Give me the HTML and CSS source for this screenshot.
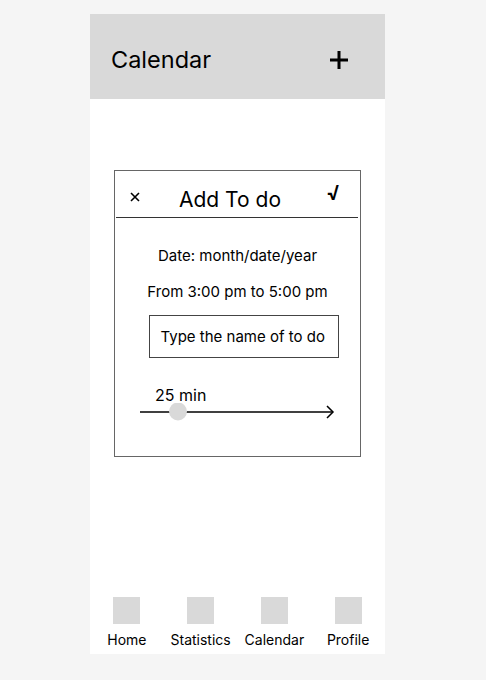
FILE: index.html
```html
<!DOCTYPE html>
<html>
<head>
<meta charset="utf-8">
<link rel="stylesheet" href="styles.css">
</head>
<body>
<div class="phone">
  <header class="topbar">
    <span class="title">Calendar</span>
    <svg class="plus" width="18" height="18" viewBox="0 0 18 18"><path d="M9 0V18M0 9H18" stroke="#000" stroke-width="3"/></svg>
  </header>
  <main class="content">
    <section class="dialog">
      <div class="dlg-head">
        <svg class="close" width="10" height="10" viewBox="0 0 10 10"><path d="M1 1L9 9M9 1L1 9" stroke="#000" stroke-width="1.6"/></svg>
        <span class="dlg-title">Add To do</span>
        <span class="check">√</span>
      </div>
      <div class="divider"></div>
      <p class="line date">Date: month/date/year</p>
      <p class="line time">From 3:00 pm to 5:00 pm</p>
      <div class="input">Type the name of to do</div>
      <div class="slider">
        <span class="slider-label">25 min</span>
        <svg class="track" width="196" height="18" viewBox="0 0 196 18"><path d="M0 9H193" stroke="#000" stroke-width="1.5"/><path d="M187 3L193 9L187 15" fill="none" stroke="#000" stroke-width="1.5"/><circle cx="38" cy="8.5" r="9" fill="#d9d9d9"/></svg>
      </div>
    </section>
  </main>
  <nav class="tabs">
    <div class="tab"><span class="ico"></span><span class="lbl">Home</span></div>
    <div class="tab"><span class="ico"></span><span class="lbl">Statistics</span></div>
    <div class="tab"><span class="ico"></span><span class="lbl">Calendar</span></div>
    <div class="tab"><span class="ico"></span><span class="lbl">Profile</span></div>
  </nav>
</div>
</body>
</html>
```

FILE: styles.css
```css
* { box-sizing: border-box; }
html, body { margin: 0; padding: 0; }
body {
  background: #f5f5f5;
  font-family: Inter, "Liberation Sans", sans-serif;
  color: #000;
  width: 486px;
  height: 680px;
  overflow: hidden;
}
.phone {
  margin: 14px 0 0 90px;
  width: 295px;
  height: 640px;
  background: #fff;
  display: flex;
  flex-direction: column;
}
.topbar {
  height: 85px;
  background: #d9d9d9;
  display: flex;
  align-items: center;
  padding: 0 37px 0 21px;
  justify-content: space-between;
}
.title {
  font-size: 23.5px;
  line-height: 1;
  margin-top: 6px;
}
.plus { margin-top: 6px; }
.content {
  flex: 1;
  padding: 71px 0 0 24px;
}
.dialog {
  width: 247px;
  height: 287px;
  border: 1px solid #666;
  display: flex;
  flex-direction: column;
  align-items: center;
}
.dlg-head {
  align-self: stretch;
  height: 46px;
  display: flex;
  align-items: center;
  padding: 0 20px 0 15px;
}
.close { margin-top: 6px; }
.dlg-title {
  font-size: 21px;
  margin-left: 39px;
  margin-top: 11px;
}
.check {
  margin-left: auto;
  font-size: 20px;
  font-weight: 700;
  margin-top: -2px;
}
.divider {
  align-self: stretch;
  height: 1px;
  background: #333;
  margin: 0 2px 0 1px;
}
.line {
  margin: 0;
  font-size: 15px;
  line-height: 18px;
}
.date { margin-top: 29px; }
.time { margin-top: 18px; }
.input {
  margin-top: 14px;
  width: 190px;
  height: 43px;
  border: 1px solid #444;
  font-size: 15px;
  display: flex;
  align-items: center;
  padding-left: 11px;
  margin-left: 12px;
}
.slider {
  align-self: stretch;
  margin-top: 27px;
  padding-left: 25px;
  display: flex;
  flex-direction: column;
}
.slider-label {
  font-size: 16px;
  line-height: 20px;
  margin-left: 15px;
}
.track { display: block; margin-top: -2px; }
.tabs {
  display: grid;
  grid-template-columns: repeat(4, 1fr);
  padding-bottom: 6px;
}
.tab {
  display: flex;
  flex-direction: column;
  align-items: center;
}
.ico {
  width: 27px;
  height: 27px;
  background: #d9d9d9;
}
.lbl {
  font-size: 14px;
  line-height: 17px;
  margin-top: 7px;
}
```
